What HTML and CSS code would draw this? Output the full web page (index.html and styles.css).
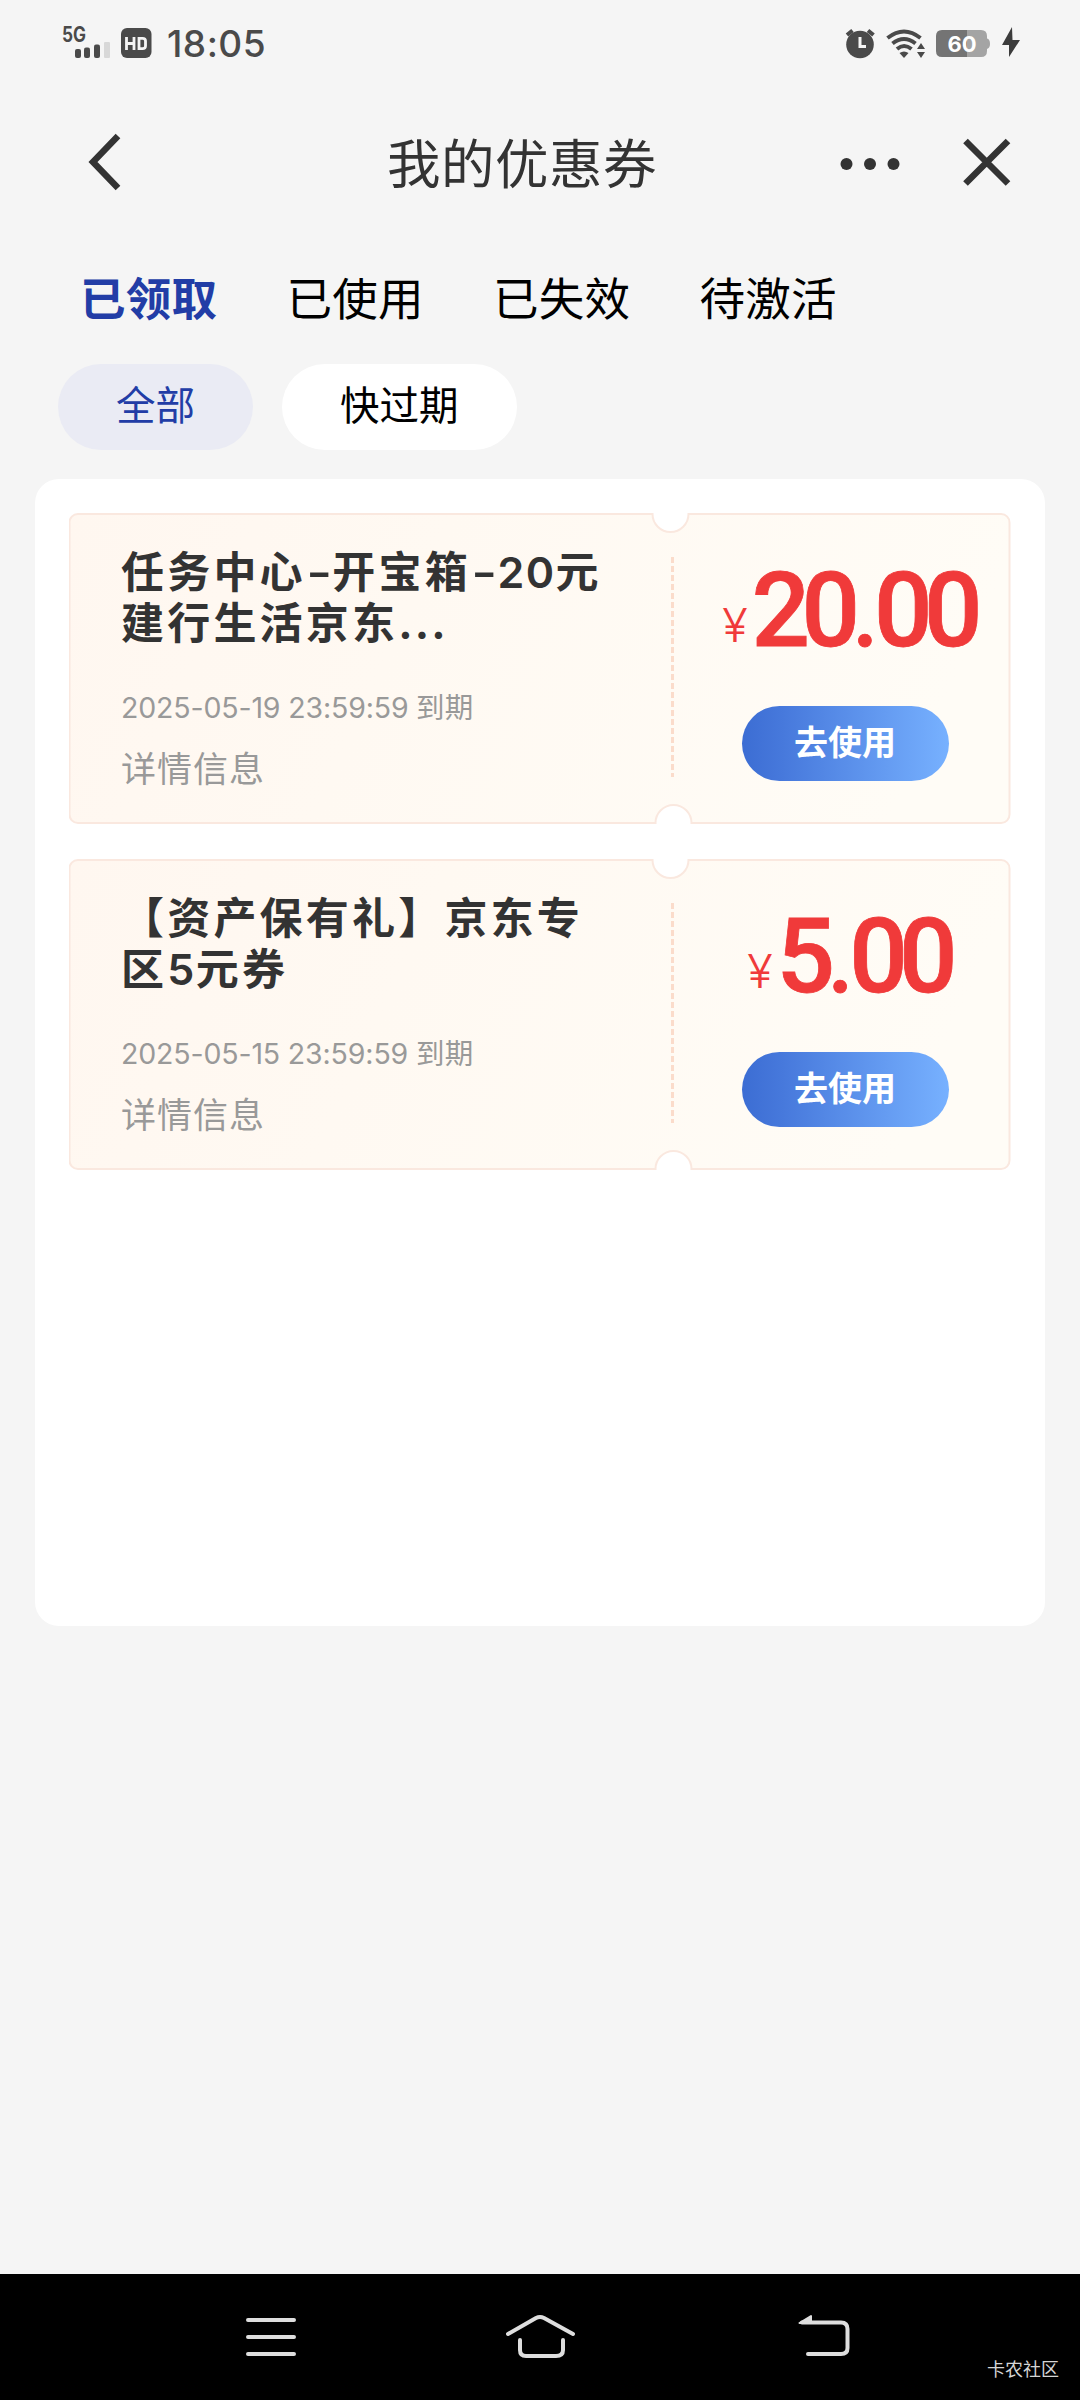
FILE: index.html
```html
<!DOCTYPE html>
<html lang="zh-CN">
<head>
<meta charset="utf-8">
<title>我的优惠券</title>
<link rel="stylesheet" href="styles.css">
</head>
<body>
<svg class="defs" width="0" height="0">
  <defs>
    <linearGradient id="paper" x1="0" y1="0" x2="1" y2="0.15">
      <stop offset="0" stop-color="#fff7f0"/>
      <stop offset="0.4" stop-color="#fff9f2"/>
      <stop offset="1" stop-color="#fffcf6"/>
    </linearGradient>
    <symbol id="ticket" viewBox="0 0 942 311">
      <path d="M9 1H583.500A18 18 0 0 0 619.500 1H932A8.500 8.500 0 0 1 940.500 10V301A8.500 8.500 0 0 1 932 310H622.500A18 18 0 0 0 586.500 310H9A8.500 8.500 0 0 1 0.500 301V10A8.500 8.500 0 0 1 9 1Z" fill="url(#paper)" stroke="#fae8df" stroke-width="2"/>
      <path d="M603.500 44V264" stroke="#fbdccb" stroke-width="3" stroke-dasharray="6 3"/>
    </symbol>
  </defs>
</svg>
<div class="screen">
  <header class="status">
    <svg class="status-left" width="92" height="40" viewBox="0 0 92 40">
      <text x="2" y="22" class="net" textLength="24" lengthAdjust="spacingAndGlyphs">5G</text>
      <g fill="#4a4a4a">
        <rect x="15" y="29" width="6" height="9" rx="2"/><rect x="24" y="27.500" width="6" height="10.500" rx="2"/><rect x="34" y="24.500" width="6" height="13.500" rx="2"/>
        <rect x="44" y="22" width="6" height="16" rx="1" fill="#d8d8d8"/>
        <rect x="61" y="8" width="30.500" height="30" rx="6"/>
      </g>
      <path d="M66.500 17V30M74 17V30M66.500 23.500H74M79 18.300H82.500Q85.500 18.300 85.500 21V26Q85.500 28.700 82.500 28.700H79Z" fill="none" stroke="#f5f5f5" stroke-width="2.800"/>
    </svg>
    <span class="clock">18:05</span>
    <svg class="status-right" width="180" height="40" viewBox="0 0 180 40">
      <g fill="#4a4a4a">
        <circle cx="20" cy="24.500" r="13.800"/>
        <path d="M7 15L12.500 10.500M33.500 15L28 10.500" stroke="#4a4a4a" stroke-width="4"/>
        <path d="M20 17V26.500H26" fill="none" stroke="#f5f5f5" stroke-width="3"/>
        <path d="M59.500 33Q64 30 68.500 33L64 38Z"/>
        <path d="M77 29L81 23L85 29ZM77 32H85L81 38Z"/>
      </g>
      <g fill="none" stroke="#4a4a4a" stroke-width="4">
        <path d="M47.500 18Q64 5 80.500 18M52.500 23.500Q64 14.500 75.500 23.500M57 29Q64 23 71.500 29"/>
      </g>
      <path d="M127 10H141Q147 10 147 16V18.500Q150 19 150 24Q150 28 147 29V31Q147 37 141 37H127Z" fill="#a4a4a4"/>
      <path d="M127 10H102Q96 10 96 16V31Q96 37 102 37H127Z" fill="#747474"/>
      <text x="122" y="31.500" class="pct">60</text>
      <path d="M172 7L162 25H169V37L180 20H172.500Z" fill="#3c3c3c"/>
    </svg>
  </header>

  <nav class="titlebar">
    <svg width="34" height="58" viewBox="0 0 34 58"><path d="M31 3L6 29L31 55" fill="none" stroke="#333" stroke-width="6.500"/></svg>
    <h1>我的优惠券</h1>
    <svg class="actions" width="172" height="50" viewBox="0 0 172 50">
      <g fill="#333"><circle cx="6.500" cy="27" r="6"/><circle cx="30" cy="27" r="6"/><circle cx="53.500" cy="27" r="6"/></g>
      <path d="M125.500 4L168 46.500M168 4L125.500 46.500" stroke="#333" stroke-width="6.500"/>
    </svg>
  </nav>

  <div class="tabs">
    <span class="tab active">已领取</span><span class="tab">已使用</span><span class="tab">已失效</span><span class="tab">待激活</span>
  </div>
  <div class="chips">
    <span class="chip selected">全部</span><span class="chip">快过期</span>
  </div>

  <main class="panel">
    <article class="coupon">
      <svg class="coupon-bg" width="942" height="311"><use href="#ticket"/></svg>
      <div class="info">
        <h2>任务中心<span class="dash">-</span>开宝箱<span class="dash">-</span><span class="latin">20</span>元<br>建行生活京东<span class="dots">...</span></h2>
        <p class="date"><span class="stamp">2025-05-19 23:59:59</span>到期</p>
        <p class="detail">详情信息</p>
      </div>
      <div class="value">
        <div class="price"><span class="yen">¥</span><span class="amount">20<span class="point">.</span>00</span></div>
        <button class="use">去使用</button>
      </div>
    </article>
    <article class="coupon">
      <svg class="coupon-bg" width="942" height="311"><use href="#ticket"/></svg>
      <div class="info">
        <h2>【资产保有礼】京东专<br>区<span class="latin">5</span>元券</h2>
        <p class="date"><span class="stamp">2025-05-15 23:59:59</span>到期</p>
        <p class="detail">详情信息</p>
      </div>
      <div class="value">
        <div class="price"><span class="yen">¥</span><span class="amount">5<span class="point">.</span>00</span></div>
        <button class="use">去使用</button>
      </div>
    </article>
  </main>

  <footer class="navbar">
    <svg class="keys" width="604" height="48" viewBox="0 0 604 48" fill="none" stroke="#dedede" stroke-width="4" stroke-linecap="round" stroke-linejoin="round">
      <path d="M2 8H48M2 25H48M2 42H48"/>
      <path d="M262 22L290 6Q294 4 298 6L327 22M274 28V38Q274 44 280 44H310Q317 44 317 38V28"/>
      <path d="M556 10.500H595Q601.500 10.500 601.500 17V36Q601.500 42 595 42H562"/>
      <path d="M553.500 11L565 4V11Z" fill="#dedede" stroke-width="2"/>
    </svg>
    <span class="mark">卡农社区</span>
  </footer>
</div>
</body>
</html>
```
FILE: styles.css
```css
* { box-sizing: border-box; }
body {
  margin: 0;
  background: #f5f5f5;
  font-family: Inter, "Noto Sans CJK SC", sans-serif;
  color: #333;
}
h1, h2, p { margin: 0; font-weight: 400; }
.defs { display: block; position: absolute; }
svg { display: block; }
.screen { width: 1080px; height: 2400px; display: flex; flex-direction: column; }

.status { height: 88px; padding: 20px 60px 0 60px; display: flex; align-items: flex-start; }
.net { font: 700 21px Inter, sans-serif; fill: #4a4a4a; }
.clock { margin: 1px 0 0 15px; font-size: 37px; line-height: 46px; letter-spacing: 0.5px; color: #4a4a4a; font-weight: 500; }
.status-right { margin-left: auto; }
.pct { font: 700 22px Inter, sans-serif; fill: #fff; text-anchor: middle; }

.titlebar { height: 148px; padding: 0 68px 0 87px; display: grid; grid-template-columns: 172px 1fr 172px; align-items: center; }
.titlebar h1 { padding: 5px 55px 0 0; font-size: 53.500px; letter-spacing: 0.5px; line-height: 70px; text-align: center; white-space: nowrap; }

.tabs { height: 128px; padding: 0 0 0 80px; display: flex; align-items: center; gap: 70px; font-size: 45.500px; color: #000; }
.tab { width: 136.500px; line-height: 60px; letter-spacing: 0.3px; white-space: nowrap; }
.tab.active { color: #223da6; font-weight: 700; }

.chips { height: 115px; padding-left: 58px; display: flex; gap: 29px; }
.chip { height: 86px; padding: 0 58px; border-radius: 43px; background: #fff; color: #000; font-size: 39.500px; line-height: 85px; }
.chip.selected { background: #eaebf4; color: #223da6; }

.panel { margin: 0 35px; height: 1147px; border-radius: 24px; background: #fff; padding: 34px; display: flex; flex-direction: column; gap: 35px; }
.coupon { position: relative; height: 311px; display: grid; grid-template-columns: 604px 1fr; }
.coupon-bg { position: absolute; inset: 0; }
.info { position: relative; padding: 34px 0 0 52px; }
.info h2 { font-size: 43px; line-height: 51px; letter-spacing: 3.200px; font-weight: 700; white-space: nowrap; }
.latin { font-weight: 600; letter-spacing: 1.500px; }
.dash { display: inline-block; width: 26.500px; letter-spacing: 0; text-align: center; font-weight: 600; transform: scaleX(1.3); }
.dots { letter-spacing: 2.200px; }
.date { margin-top: 40px; font-size: 28.500px; line-height: 38px; color: #999; letter-spacing: 0.3px; white-space: nowrap; }
.stamp { display: inline-block; width: 295px; letter-spacing: -0.15px; }
.detail { margin-top: 18px; font-size: 35px; line-height: 48px; letter-spacing: 1px; color: #999; }
.value { position: relative; display: flex; flex-direction: column; align-items: center; padding: 48px 0 0 6px; }
.price { height: 100px; padding-left: 6px; display: flex; align-items: baseline; color: #f03a3a; white-space: nowrap; }
.yen { font: 300 47px/50px Inter, sans-serif; margin-right: 4px; position: relative; top: -4px; }
.amount { font: 500 103px/100px Roboto, sans-serif; letter-spacing: -8.700px; -webkit-text-stroke: 0.8px #f03a3a; }
.point { font-family: Inter, sans-serif; font-size: 90px; line-height: 1px; letter-spacing: -4.500px; }
.use { margin-top: 45px; width: 207px; height: 75px; padding: 0 0 2px; border: 0; border-radius: 38px; background: linear-gradient(90deg, #3c6dd3, #4779dc 20%, #77b1ff); color: #fff; font: 700 34px/73px Inter, "Noto Sans CJK SC", sans-serif; }

.navbar { margin-top: auto; height: 126px; background: #000; padding: 38px 21px 0 246px; display: flex; justify-content: space-between; }
.mark { align-self: flex-end; font-size: 18px; line-height: 26px; padding-bottom: 17px; height: 43px; color: #d5d5d5; }
```
